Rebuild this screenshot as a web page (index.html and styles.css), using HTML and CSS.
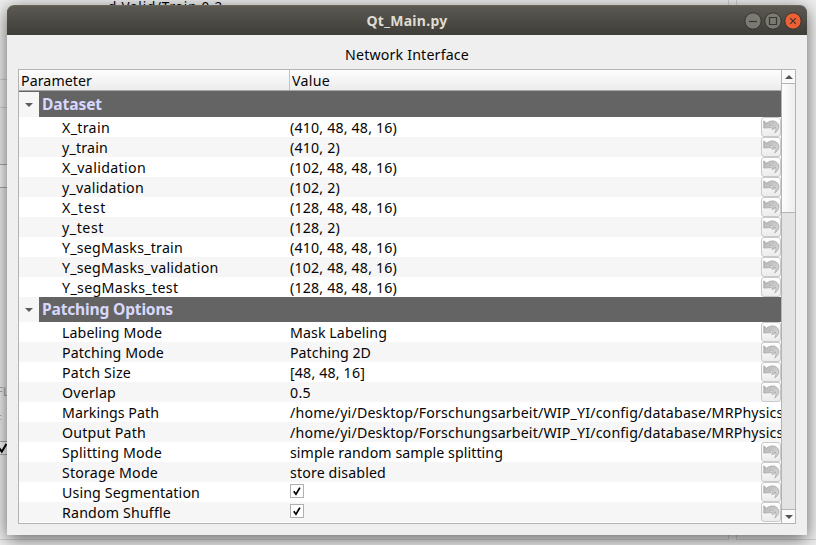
FILE: index.html
```html
<!DOCTYPE html>
<html lang="en">
<head>
<meta charset="utf-8">
<title>Qt_Main.py</title>
<link rel="stylesheet" href="styles.css">
</head>
<body>
<svg width="0" height="0" class="defs">
  <defs>
    <linearGradient id="arrow" x1="0" y1="0" x2="1" y2="1"><stop offset="0" stop-color="#b4b4b4"/><stop offset="1" stop-color="#dcdcdc"/></linearGradient>
    <symbol id="undo" viewBox="0 0 17 15"><path d="M.8 1.800 L.8 9 L8.500 8.600 L6.300 6.700 C8.300 5.900 9.900 6.700 9.900 8.200 C9.900 9.200 9.300 9.700 8.600 9.900 C9.900 11 12.300 10 12.200 7.800 C13.500 9.400 13.100 12 11.600 13.800 C15.800 11.500 17 7.500 14.600 4.300 C12.200 1.300 7.500 1 3.500 4.200Z" fill="url(#arrow)" stroke="#a6a6a6" stroke-width=".8"/></symbol>
    <symbol id="check" viewBox="0 0 14 14"><path d="M3.200 7.200 L5.800 10.700 L10.400 3" fill="none" stroke="#000" stroke-width="2"/></symbol>
  </defs>
</svg>
<div class="desktop">
  <span class="behind-text" data-w="115">d Valid/Train 0.2</span>
  <i class="rule r1"></i><i class="rule r2"></i><i class="field"></i>
  <span class="behind-fl">FL</span><span class="behind-f">F</span>
  <i class="field low"></i>
  <svg class="behind-check"><use href="#check" width="14" height="14"/></svg>
  <i class="rule r3"></i><i class="rule r4"></i><i class="gap g1"></i><i class="gap g2"></i>
</div>
<main class="window">
  <header class="titlebar">
    <b class="title" data-w="81">Qt_Main.py</b>
    <div class="buttons">
      <svg viewBox="0 0 18 18"><circle cx="9" cy="9" r="8.200" class="round"/><path d="M5 9.500H13" class="mark"/></svg>
      <svg viewBox="0 0 18 18"><circle cx="9" cy="9" r="8.200" class="round"/><path d="M5.500 5.500H12.500V12.500H5.500Z" class="mark"/></svg>
      <svg viewBox="0 0 18 18"><circle cx="9" cy="9" r="8.200" class="round close"/><path d="M6.200 6.200L11.800 11.800M11.800 6.200L6.200 11.800" class="mark"/></svg>
    </div>
  </header>
  <div class="caption"><span data-w="124">Network Interface</span></div>
  <section class="tree">
    <div class="content">
      <div class="head"><div class="name"><span data-w="71">Parameter</span></div><div class="val"><span data-w="38">Value</span></div></div>
      <div id="rows"></div>
    </div>
    <div class="scroll">
      <div class="step"><svg viewBox="0 0 8 4"><path d="M0 4L4 0L8 4Z"/></svg></div>
      <div class="thumb"></div>
      <div class="track"></div>
      <div class="step"><svg viewBox="0 0 8 4"><path d="M0 0L4 4L8 0Z"/></svg></div>
    </div>
  </section>
</main>
<script src="script.js"></script>
</body>
</html>
```
FILE: styles.css
```css
* { box-sizing: border-box; }
body { margin: 0; width: 816px; height: 545px; overflow: hidden; background: #efefef; color: #050505; font: 14.2px/20px "Noto Sans", "Open Sans", sans-serif; }
.defs { position: absolute; }
.desktop { position: absolute; inset: 0; overflow: hidden; }
.desktop > * { position: absolute; }
.behind-text { left: 108px; top: -2px; font-size: 13.5px; line-height: 18px; white-space: nowrap; }
.behind-fl { left: -4px; top: 381px; color: #aaa; font-size: 13px; }
.behind-f { left: -5px; top: 410px; color: #aaa; font-size: 12px; }
.behind-check { left: -4px; top: 441px; width: 14px; height: 14px; }
.rule { height: 1px; background: #d2d2d2; left: 0; width: 8px; }
.r1 { top: 79px; }
.r2 { top: 107px; }
.r3 { top: 539px; width: 728px; }
.r4 { top: 539px; left: 737px; width: 79px; }
.field { left: -2px; top: 164px; width: 12px; height: 24px; border: 1px solid #aaa; background: #f8f8f8; }
.field.low { top: 441px; height: 14px; }
.gap { left: 728px; width: 9px; border: solid #d0d0d0; border-width: 0 1px; }
.g1 { top: 0; height: 6px; }
.g2 { top: 535px; height: 5px; }
.window { position: relative; display: flex; flex-direction: column; width: 800px; height: 530px; margin: 5px 0 0 7px; background: #efefef; border-radius: 7px 7px 0 0; box-shadow: 0 4px 18px rgba(0,0,0,.6); }
.titlebar { height: 30px; flex: none; display: grid; grid-template-columns: 1fr auto 1fr; align-items: center; border-radius: 7px 7px 0 0; background: linear-gradient(#5b5952, #3e3d38); border-top: 1px solid #68665d; }
.title { grid-column: 2; font-size: 14px; color: #dfdbd2; white-space: nowrap; }
.buttons { display: flex; gap: 2px; justify-content: flex-end; padding-right: 5px; }
.buttons svg { width: 18px; height: 18px; }
.round { fill: #7b7972; stroke: #35342f; }
.close { fill: #ed6036; }
.mark { fill: none; stroke: #383731; stroke-width: 1.2; }
.caption { height: 34px; flex: none; text-align: center; line-height: 40px; white-space: nowrap; }
.tree { margin: 0 11px; height: 455px; display: flex; border: 1px solid #b4b4b4; background: #fff; }
.content { width: 762px; overflow: hidden; }
.head { height: 21px; display: flex; background: linear-gradient(#fdfdfd, #ececec); border-bottom: 1px solid #a8a8a8; }
.head .name { width: 271px; padding-left: 2px; border-right: 1px solid #c4c4c4; line-height: 22px; }
.head .val { padding-left: 2px; line-height: 22px; }
.group { height: 25px; display: flex; background: #646464; color: #d8d8ff; font-size: 15.6px; font-weight: 700; line-height: 24px; }
.group:first-child { height: 26px; padding-top: 1px; }
.fold { width: 20px; margin-right: 3px; background: #f6f6f6; display: grid; place-items: center; }
.fold svg { width: 8px; height: 4px; fill: #5d5d5d; }
.row { height: 20px; display: flex; position: relative; white-space: nowrap; }
.row.alt { background: #f6f6f6; }
.row .name { width: 271px; padding-left: 43px; line-height: 21px; }
.row .val { flex: 1; min-width: 0; overflow: hidden; line-height: 21px; }
.box { display: block; width: 14px; height: 14px; margin-top: 2px; border: 1px solid #b0b0b0; background: #fff; }
.box svg { display: block; width: 12px; height: 12px; }
.reset { width: 20px; height: 20px; flex: none; padding: 1px; border: 1px solid #c9c9c9; border-radius: 3px; background: linear-gradient(#fff, #ececec); }
.reset svg { display: block; width: 17px; height: 15px; }
.scroll { width: 14px; display: flex; flex-direction: column; border-left: 1px solid #b4b4b4; }
.step { height: 14px; flex: none; display: grid; place-items: center; background: #fafafa; border-bottom: 1px solid #b4b4b4; }
.step:last-child { border-bottom: 0; border-top: 1px solid #b4b4b4; }
.step svg { width: 8px; height: 4px; fill: #555; }
.thumb { height: 129px; flex: none; background: linear-gradient(90deg, #fdfdfd, #ededed); border-bottom: 1px solid #b4b4b4; }
.track { flex: 1; background: #e3e3e3; }
```
FILE: script.js
```js
const path = '/home/yi/Desktop/Forschungsarbeit/WIP_YI/config/database/MRPhysics';
// Each entry: name, name width, value, value width.
const groups = [
  ['Dataset', 60, [
    ['X_train', 48, '(410, 48, 48, 16)', 107], ['y_train', 46, '(410, 2)', 50],
    ['X_validation', 84, '(102, 48, 48, 16)', 107], ['y_validation', 82, '(102, 2)', 50],
    ['X_test', 44, '(128, 48, 48, 16)', 107], ['y_test', 42, '(128, 2)', 50],
    ['Y_segMasks_train', 121, '(410, 48, 48, 16)', 107],
    ['Y_segMasks_validation', 156.500, '(102, 48, 48, 16)', 107],
    ['Y_segMasks_test', 116.500, '(128, 48, 48, 16)', 107]]],
  ['Patching Options', 131, [
    ['Labeling Mode', 100, 'Mask Labeling', 97], ['Patching Mode', 102, 'Patching 2D', 81],
    ['Patch Size', 69, '[48, 48, 16]', 75], ['Overlap', 54, '0.5', 21],
    ['Markings Path', 97, path, 493.500], ['Output Path', 84, path, 493.500],
    ['Splitting Mode', 100, 'simple random sample splitting', 213],
    ['Storage Mode', 96, 'store disabled', 96],
    ['Using Segmentation', 138, true], ['Random Shuffle', 109, true]]]
];
document.getElementById('rows').innerHTML = groups.map(([title, w, rows]) =>
  `<div class="group"><div class="fold"><svg viewBox="0 0 8 4"><path d="M0 0L4 4L8 0Z"/></svg></div><span data-w="${w}">${title}</span></div>` +
  rows.map(([name, nw, value, vw], i) => `<div class="row${i % 2 ? ' alt' : ''}"><div class="name"><span data-w="${nw}">${name}</span></div><div class="val">${value === true ? '<span class="box"><svg viewBox="0 0 14 14"><use href="#check"/></svg></span>' : `<span data-w="${vw}">${value}</span>`}</div>${value === path ? '' : '<div class="reset"><svg><use href="#undo"/></svg></div>'}</div>`).join('')).join('');
document.querySelectorAll('[data-w]').forEach(el => {
  const gap = (Number(el.dataset.w) - el.getBoundingClientRect().width) / el.textContent.length;
  el.style.letterSpacing = gap + 'px';
});
```
